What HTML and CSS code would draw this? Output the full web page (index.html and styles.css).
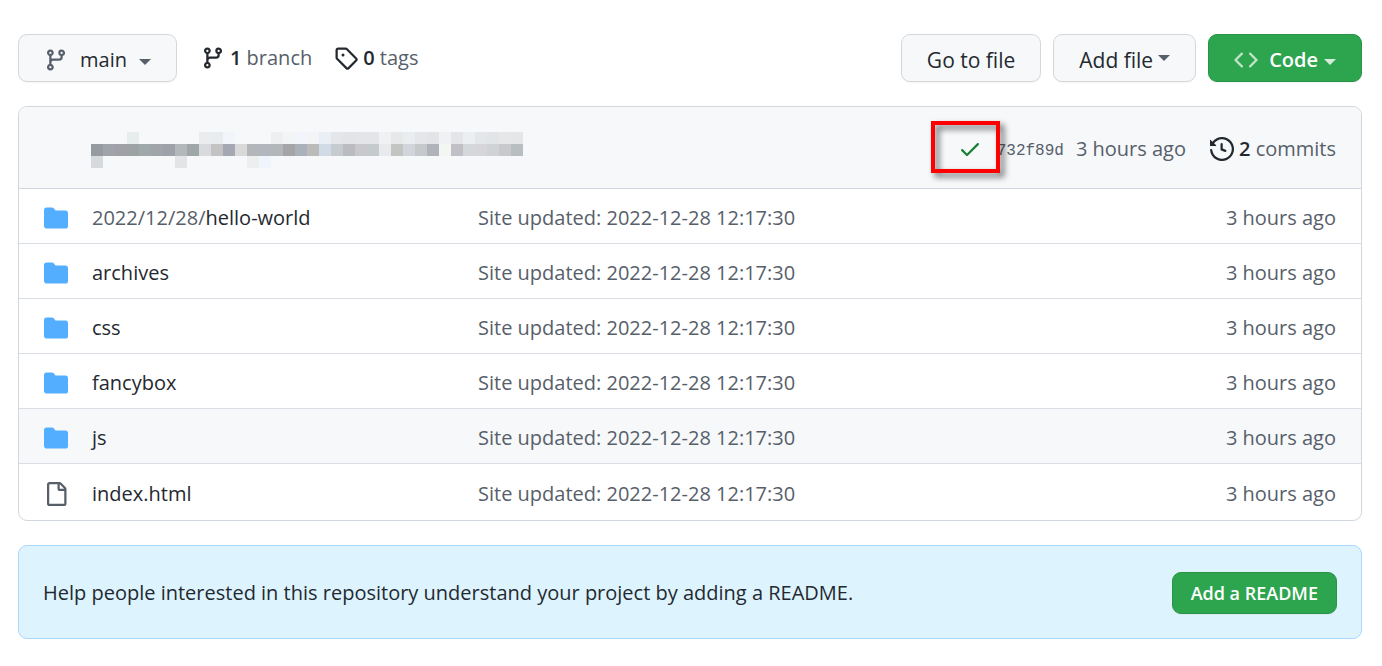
FILE: index.html
```html
<!DOCTYPE html>
<html lang="en">
<head>
<meta charset="utf-8">
<title>Repository files</title>
<meta name="viewport" content="width=device-width, initial-scale=1">
<link rel="stylesheet" href="styles.css">
</head>
<body>
<svg class="sprite" aria-hidden="true">
  <symbol id="branch" viewBox="0 0 16 16"><path d="M11.75 2.5a.75.75 0 100 1.5.75.75 0 000-1.5zm-2.25.75a2.25 2.25 0 113 2.122V6A2.5 2.5 0 0110 8.5H6a1 1 0 00-1 1v1.128a2.251 2.251 0 11-1.5 0V5.372a2.25 2.25 0 111.5 0v1.836A2.492 2.492 0 016 7h4a1 1 0 001-1v-.628A2.25 2.25 0 019.5 3.25zM4.25 12a.75.75 0 100 1.5.75.75 0 000-1.5zM3.5 3.25a.75.75 0 111.5 0 .75.75 0 01-1.5 0z" fill-rule="evenodd"/></symbol>
  <symbol id="tag" viewBox="0 0 16 16"><path d="M2.5 7.775V2.75a.25.25 0 01.25-.25h5.025a.25.25 0 01.177.073l6.25 6.25a.25.25 0 010 .354l-5.025 5.025a.25.25 0 01-.354 0l-6.25-6.25a.25.25 0 01-.073-.177zm-1.5 0V2.75C1 1.784 1.784 1 2.75 1h5.025c.464 0 .91.184 1.238.513l6.25 6.25a1.75 1.75 0 010 2.474l-5.026 5.026a1.75 1.75 0 01-2.474 0l-6.25-6.25A1.75 1.75 0 011 7.775zM6 5a1 1 0 100 2 1 1 0 000-2z" fill-rule="evenodd"/></symbol>
  <symbol id="code" viewBox="0 0 16 16"><path d="M4.72 3.22a.75.75 0 011.06 1.06L2.06 8l3.72 3.72a.75.75 0 11-1.06 1.06L.47 8.53a.75.75 0 010-1.06l4.25-4.25zm6.56 0a.75.75 0 10-1.06 1.06L13.94 8l-3.72 3.72a.75.75 0 101.06 1.06l4.25-4.25a.75.75 0 000-1.06l-4.25-4.25z" fill-rule="evenodd"/></symbol>
  <symbol id="check" viewBox="0 0 16 16"><path d="M13.78 4.22a.75.75 0 010 1.06l-7.25 7.25a.75.75 0 01-1.06 0L2.22 9.28a.75.75 0 011.06-1.06L6 10.94l6.72-6.72a.75.75 0 011.06 0z" fill-rule="evenodd"/></symbol>
  <symbol id="history" viewBox="0 0 16 16"><path d="M1.643 3.143L.427 1.927A.25.25 0 000 2.104V5.75c0 .138.112.25.25.25h3.646a.25.25 0 00.177-.427L2.715 4.215a6.5 6.5 0 11-1.18 4.458.75.75 0 10-1.493.154 8.001 8.001 0 101.6-5.684zM7.75 4a.75.75 0 01.75.75v2.992l2.028.812a.75.75 0 01-.557 1.392l-2.5-1A.75.75 0 017 8.25v-3.5A.75.75 0 017.75 4z" fill-rule="evenodd"/></symbol>
  <symbol id="folder" viewBox="0 0 16 16"><path d="M1.75 1A1.75 1.75 0 000 2.75v10.5C0 14.216.784 15 1.75 15h12.5A1.75 1.75 0 0016 13.25v-8.5A1.75 1.75 0 0014.25 3h-6.5a.25.25 0 01-.2-.1l-.9-1.2c-.33-.44-.85-.7-1.4-.7h-3.5z"/></symbol>
  <symbol id="file" viewBox="0 0 16 16"><path d="M2 1.75C2 .784 2.784 0 3.75 0h6.586c.464 0 .909.184 1.237.513l2.914 2.914c.329.328.513.773.513 1.237v9.586A1.75 1.75 0 0 1 13.25 16h-9.5A1.75 1.75 0 0 1 2 14.25Zm1.75-.25a.25.25 0 0 0-.25.25v12.5c0 .138.112.25.25.25h9.5a.25.25 0 0 0 .25-.25V6h-2.75A1.75 1.75 0 0 1 9 4.25V1.5Zm6.75.062V4.25c0 .138.112.25.25.25h2.688l-.011-.013-2.914-2.914-.013-.011Z" fill-rule="evenodd"/></symbol>
</svg>

<main class="page">
  <div class="toolbar">
    <button class="btn" type="button"><svg class="icon btn-icon"><use href="#branch"/></svg><span>main</span><span class="caret caret-low"></span></button>
    <nav class="refs">
      <a class="stat" href="#branches"><svg class="icon"><use href="#branch"/></svg><span><strong>1</strong> branch</span></a>
      <a class="stat" href="#tags"><svg class="icon"><use href="#tag"/></svg><span><strong>0</strong> tags</span></a>
    </nav>
    <div class="actions">
      <a class="btn btn-text" href="#find">Go to file</a>
      <button class="btn btn-text" type="button"><span>Add file</span><span class="caret"></span></button>
      <button class="btn btn-primary" type="button"><svg class="icon btn-icon"><use href="#code"/></svg><span class="code-label">Code<span class="caret caret-low"></span></span></button>
    </div>
  </div>

  <section class="box">
    <div class="commit">
      <svg class="mosaic" viewBox="0 0 36 3" shape-rendering="crispEdges" aria-hidden="true"></svg>
      <div class="commit-meta">
        <span class="status"><svg class="icon"><use href="#check"/></svg><span class="highlight"></span></span>
        <a class="sha" href="#commit">732f89d</a>
        <a class="when" href="#commit">3 hours ago</a>
        <a class="stat" href="#commits"><svg class="icon"><use href="#history"/></svg><span><strong>2</strong> commits</span></a>
      </div>
    </div>
    <table class="files">
      <tbody>
        <tr><td class="kind"><svg class="icon folder"><use href="#folder"/></svg></td><td class="name"><a href="#hello"><span class="muted">2022/12/28/</span>hello-world</a></td><td class="message"><a href="#c">Site updated: 2022-12-28 12:17:30</a></td><td class="age">3 hours ago</td></tr>
        <tr><td class="kind"><svg class="icon folder"><use href="#folder"/></svg></td><td class="name"><a href="#archives">archives</a></td><td class="message"><a href="#c">Site updated: 2022-12-28 12:17:30</a></td><td class="age">3 hours ago</td></tr>
        <tr><td class="kind"><svg class="icon folder"><use href="#folder"/></svg></td><td class="name"><a href="#css">css</a></td><td class="message"><a href="#c">Site updated: 2022-12-28 12:17:30</a></td><td class="age">3 hours ago</td></tr>
        <tr><td class="kind"><svg class="icon folder"><use href="#folder"/></svg></td><td class="name"><a href="#fancybox">fancybox</a></td><td class="message"><a href="#c">Site updated: 2022-12-28 12:17:30</a></td><td class="age">3 hours ago</td></tr>
        <tr class="active"><td class="kind"><svg class="icon folder"><use href="#folder"/></svg></td><td class="name"><a href="#js">js</a></td><td class="message"><a href="#c">Site updated: 2022-12-28 12:17:30</a></td><td class="age">3 hours ago</td></tr>
        <tr><td class="kind"><svg class="icon"><use href="#file"/></svg></td><td class="name"><a href="#index">index.html</a></td><td class="message"><a href="#c">Site updated: 2022-12-28 12:17:30</a></td><td class="age">3 hours ago</td></tr>
      </tbody>
    </table>
  </section>

  <section class="notice">
    <p>Help people interested in this repository understand your project by adding a README.</p>
    <a class="btn btn-primary btn-small" href="#readme">Add a README</a>
  </section>
</main>
<script src="mosaic.js"></script>
</body>
</html>
```

FILE: styles.css
```css
* { box-sizing: border-box; }

body {
  margin: 0;
  background: #fff;
  color: #24292f;
  font: 20px/30px "Open Sans", "Noto Sans", sans-serif;
}

a { color: inherit; text-decoration: none; }
p { margin: 0; }
strong { font-weight: 600; color: #24292f; }

.sprite { display: none; }

.page {
  display: flex;
  flex-direction: column;
  gap: 24px;
  padding: 34px 20px 24px 18px;
}

.icon {
  display: block;
  flex: none;
  width: 24px;
  height: 24px;
  fill: currentColor;
}

.toolbar { display: flex; align-items: center; }

.btn {
  display: inline-flex;
  align-items: center;
  gap: 12px;
  height: 48px;
  padding: 3px 25px 0;
  border: 1px solid #d5d8da;
  border-radius: 9px;
  background: #f6f8fa;
  box-shadow: 0 1px 0 rgba(27, 31, 36, 0.04);
  color: #24292f;
  font: 500 20px/30px "Open Sans", "Noto Sans", sans-serif;
  white-space: nowrap;
}

.btn-icon { color: #57606a; }

.caret {
  display: inline-block;
  border: 6px solid transparent;
  border-top-color: #57606a;
  border-bottom: 0;
}

.caret-low { margin-top: 5px; }

.btn-text {
  gap: 5px;
  font-size: 21px;
}

.btn-text .caret { margin-bottom: 4px; }

.btn-primary {
  gap: 11px;
  border-color: #2b9348;
  background: #2da44e;
  color: #fff;
  font-weight: 600;
}

.btn-primary .btn-icon { color: #c0e4ca; }
.btn-primary .caret { border-top-color: #d5eddc; }
.code-label { display: inline-flex; align-items: center; gap: 6px; }

.btn-small {
  height: 42px;
  padding: 0 18px;
  font-size: 18px;
}

.refs {
  display: flex;
  gap: 22px;
  margin-left: 24px;
}

.stat {
  display: flex;
  align-items: center;
  gap: 5px;
  color: #57606a;
}

.stat .icon { color: #24292f; }

.actions {
  display: flex;
  gap: 12px;
  margin-left: auto;
}

.box {
  border: 1px solid #d0d7de;
  border-radius: 9px;
  overflow: hidden;
}

.commit {
  display: flex;
  align-items: center;
  justify-content: space-between;
  min-height: 82px;
  padding: 3px 25px 0 72px;
  border-bottom: 1px solid #d0d7de;
  background: #f6f8fa;
}

.mosaic { width: 432px; height: 36px; margin-top: 2px; }

.commit-meta {
  display: flex;
  align-items: center;
  color: #57606a;
}

.status { position: relative; color: #1a7f37; margin-right: 15px; }

.highlight {
  position: absolute;
  top: -16px;
  left: -27px;
  width: 69px;
  height: 52px;
  border: 4px solid #f00;
  filter: drop-shadow(4px 4px 3px rgba(0, 0, 0, 0.6));
}

.sha {
  padding-top: 4px;
  margin-right: 12px;
  font: 16px/30px "Liberation Mono", monospace;
}

.when { margin-right: 24px; }

.files {
  width: 100%;
  border-spacing: 0;
  table-layout: fixed;
}

.files td { height: 55px; padding: 4px 0 0; border-bottom: 1px solid #d8dee4; }
.files tr:last-child td { height: 56px; border-bottom: 0; }
.files .kind { width: 73px; padding-left: 25px; color: #57606a; }
.files .name { width: 386px; }
.files .age { width: 160px; padding-right: 25px; text-align: right; }
.files .folder { color: #54aeff; }
.files .active { background: #f6f8fa; }
.message, .age, .muted { color: #57606a; }

.notice {
  display: flex;
  align-items: center;
  justify-content: space-between;
  gap: 24px;
  min-height: 94px;
  padding: 26px 24px 24px;
  border: 1px solid #a8d8ff;
  border-radius: 9px;
  background: #ddf4ff;
}
```

FILE: mosaic.js
```js
// Pixelated author block: colour of each cell by row, empty entries stay blank.
const rows = [
  ",,,e7ecec,,,,,,ebecee,e8ecef,f2f5fa,,,,edeff0,f3f4f5,f2f5fb,f3f4f5,eaeff6,e4e6ea,e3e4e7,e4e5e8,e4e5e8,f0f1f3,e7e9e9,e9edf0,e4e6ea,e3e4e8,f0f1f2,e4e5e9,ebeff2,e5e6e8,e1e5e7,e6e7e9,e4e6e7",
  "959b9f,a0a3aa,a0a1a6,9ca3a2,a0a9a9,a0a5aa,9fa1aa,b3b8bb,9fa7a8,d9dadb,c3c3c3,a3a8b2,d9d9d9,b3b7b9,b3b7bd,b2b7ba,a5a5a8,abb1ba,bbbbba,d1dbe6,c5cbce,bbbcc0,c8c8cd,c5cacd,e9eaee,c3c5c3,d2d6da,c5c9cc,b0b4ba,f4f6f1,c0c0c6,d5d8db,d6d5da,cfd3d6,c8c8cd,b9bec0",
  "d6dadd,,,,,,,e2e4e6,,,,,,edefef,eff5fa"
];
const mosaic = document.querySelector(".mosaic");
rows.forEach((row, y) => row.split(",").forEach((color, x) => {
  if (!color) return;
  const cell = document.createElementNS("http://www.w3.org/2000/svg", "rect");
  cell.setAttribute("x", x);
  cell.setAttribute("y", y);
  cell.setAttribute("width", 1);
  cell.setAttribute("height", 1);
  cell.setAttribute("fill", "#" + color);
  mosaic.append(cell);
}));
```
